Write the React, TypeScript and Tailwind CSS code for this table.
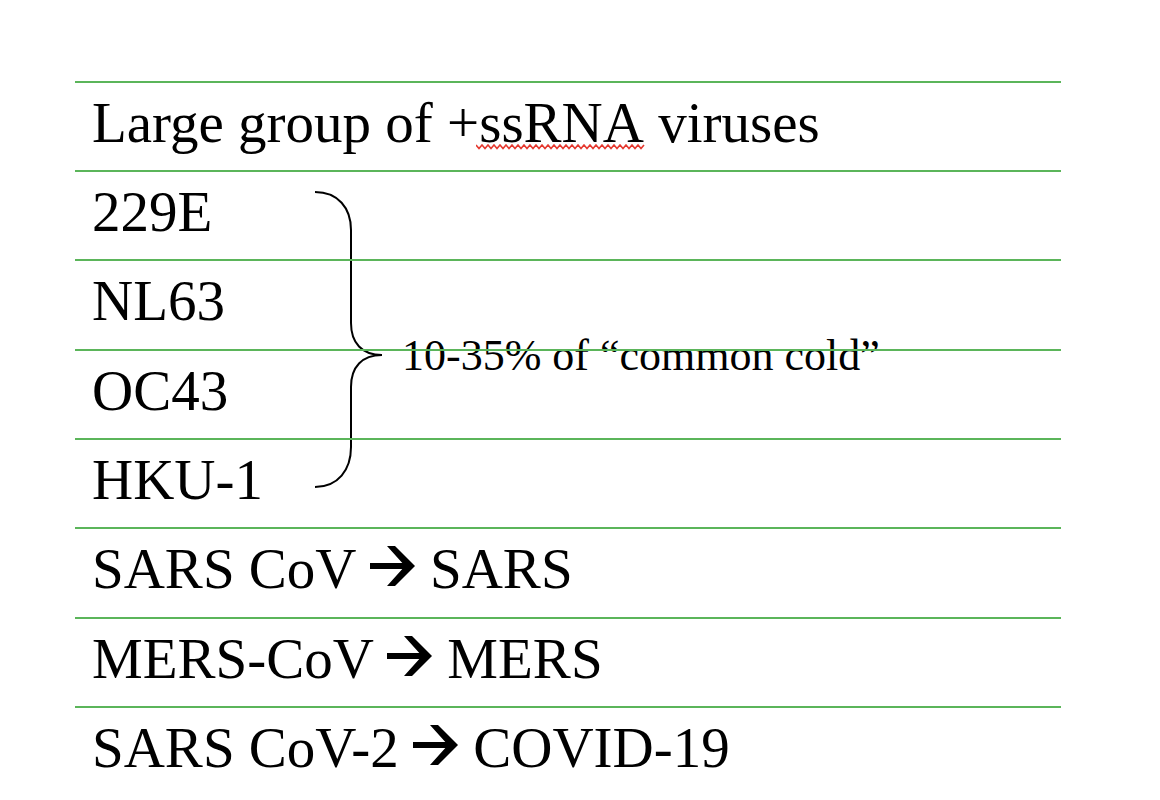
import React from "react";

const Arrow = () => (
    <svg className="inline-block align-[2px]" width="46" height="40" viewBox="0 0 46 40" aria-hidden="true">
        <rect x="0" y="17" width="38" height="6" fill="#000" />
        <polygon points="17,0 25,0 45,20 25,40 17,40 35,20" fill="#000" />
    </svg>
);

// red spell-check squiggle, drawn over the text
const Squiggle = () => (
    <svg className="absolute left-[-3px] top-[53px]" width="170" height="6" viewBox="0 0 170 6" aria-hidden="true">
        <polyline
            points="0,1 3,4.5 6,1 9,4.5 12,1 15,4.5 18,1 21,4.5 24,1 27,4.5 30,1 33,4.5 36,1 39,4.5 42,1 45,4.5 48,1 51,4.5 54,1 57,4.5 60,1 63,4.5 66,1 69,4.5 72,1 75,4.5 78,1 81,4.5 84,1 87,4.5 90,1 93,4.5 96,1 99,4.5 102,1 105,4.5 108,1 111,4.5 114,1 117,4.5 120,1 123,4.5 126,1 129,4.5 132,1 135,4.5 138,1 141,4.5 144,1 147,4.5 150,1 153,4.5 156,1 159,4.5 162,1 165,4.5 168,1"
            fill="none"
            stroke="#e5392f"
            strokeWidth="1.6"
        />
    </svg>
);

const rows = [
    { h: "h-[89px]", content: <>Large group of +<span className="relative">ssRNA<Squiggle /></span> viruses</> },
    { h: "h-[89px]", content: <>229E</> },
    { h: "h-[90px]", content: <>NL63</> },
    { h: "h-[89px]", content: <>OC43</> },
    { h: "h-[89px]", content: <>HKU-1</> },
    { h: "h-[90px]", content: <>SARS CoV <Arrow /> SARS</> },
    { h: "h-[89px]", content: <>MERS-CoV <Arrow /> MERS</> },
    { h: "h-[94px]", content: <>SARS CoV-2 <Arrow /> COVID-19</> },
];

export default function App() {
    return (
        <div className="relative h-[800px] w-[1160px] overflow-hidden bg-white text-black font-['Liberation_Serif','Times_New_Roman',serif]">
            <div className="pl-[75px] pt-[81px]">
                <div className="w-[986px]">
                    {rows.map((row, i) => (
                        <div key={i} className={`relative z-10 border-t-2 border-[#5bb55a] pl-[17px] pt-[11px] text-[57px] leading-none whitespace-nowrap ${row.h}`}>
                            {row.content}
                        </div>
                    ))}
                </div>
            </div>

            {/* brace + label over the 4 cold viruses */}
            <svg className="absolute left-[300px] top-[180px]" width="100" height="320" viewBox="0 0 100 320" aria-hidden="true">
                <path
                    d="M15,12 C38,12 51,28 51,50 L51,143 C51,163 62,175 82,175 C62,175 51,187 51,207 L51,267 C51,290 38,307 15,307"
                    fill="none"
                    stroke="#000"
                    strokeWidth="2"
                />
            </svg>
            <div className="absolute left-[402px] top-[334px] text-[44px] leading-none whitespace-nowrap">
                10-35% of “common cold”
            </div>
        </div>
    );
}
